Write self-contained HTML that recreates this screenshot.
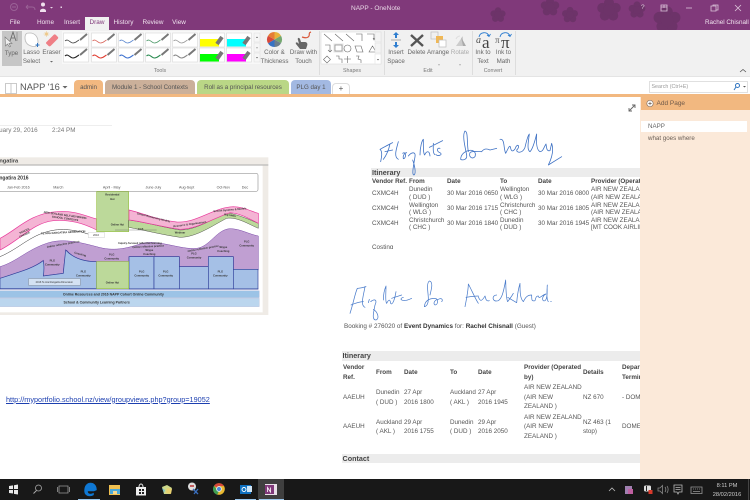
<!DOCTYPE html>
<html><head><meta charset="utf-8"><title>NAPP - OneNote</title>
<style>
html,body{margin:0;padding:0;background:#fff}
body{width:750px;height:500px;overflow:hidden;position:relative;font-family:"Liberation Sans",sans-serif;filter:blur(.3px)}
.a{position:absolute}
.t{position:absolute;white-space:nowrap;line-height:8px;font-size:6.3px;color:#555}
.b{font-weight:bold;color:#444}
.c{position:absolute;white-space:nowrap;text-align:center;transform:translateX(-50%);font-size:6.2px;line-height:8px;color:#666}
.tab{position:absolute;top:19px;font-size:6.4px;line-height:8px;color:#f0e4ef;transform:translateX(-50%);white-space:nowrap}
.nt{position:absolute;top:80px;height:14px;border-radius:4px 4px 0 0;font-size:6.2px;line-height:15px;color:#555;text-align:center;white-space:nowrap}
</style></head><body>

<!-- title bar -->
<div class="a" style="left:0;top:0;width:750px;height:30px;background:#80397a"></div>
<svg class="a" style="left:0;top:0" width="750" height="30" viewBox="0 0 750 30">
<defs><g id="fl"><circle cx="0" cy="-5" r="3.6"/><circle cx="4.8" cy="-1.5" r="3.6"/><circle cx="3" cy="4" r="3.6"/><circle cx="-3" cy="4" r="3.6"/><circle cx="-4.8" cy="-1.5" r="3.6"/><circle r="4"/></g></defs>
<g fill="#6d3369">
<use href="#fl" transform="translate(498,15) scale(.9)"/>
<use href="#fl" transform="translate(550,7) scale(1.1)"/>
<use href="#fl" transform="translate(570,15) scale(.95)"/>
<use href="#fl" transform="translate(609,10) scale(1.4)"/>
<use href="#fl" transform="translate(637,10) scale(1)"/>
<use href="#fl" transform="translate(667,20) scale(1.6)"/>
</g>
<g fill="none" stroke="#9a6296" stroke-width="1">
<circle cx="14" cy="7" r="3.5"/><path d="M12 7h4M26 7h6c2 0 3 1 3 3M26 7l2-2M26 7l2 2"/>
</g>
<circle cx="43" cy="4.5" r="2" fill="#f0e0ee"/><path d="M40 11c0-3 6-3 6 0v1h-6z" fill="#f0e0ee"/>
<path d="M50 7h3l-1.500 1.500zM60.500 6.500h1.500v1.500h-1.500z" fill="#e6d4e4"/>
<g fill="none" stroke="#dcc6da" stroke-width=".8">
<path d="M661 5h6v6h-6zM661 7h6M664 5v3"/>
<path d="M686 8h6"/>
<path d="M711 6h5v5h-5zM713 6v-1h5v5h-2"/>
<path d="M735 5l6 6M741 5l-6 6"/>
</g>
</svg>
<div class="t" style="left:641px;top:4px;color:#e0cfde;font-size:6.500px">?</div>
<div class="t" style="left:351px;top:5px;width:48px;text-align:center;color:#e8d8e6;font-size:6.500px">NAPP - OneNote</div>
<div class="tab" style="left:15px">File</div>
<div class="tab" style="left:45.500px">Home</div>
<div class="tab" style="left:72px">Insert</div>
<div class="a" style="left:85px;top:17px;width:24px;height:13px;background:#f1f1f1"></div>
<div class="tab" style="left:97px;color:#80397a">Draw</div>
<div class="tab" style="left:123.500px">History</div>
<div class="tab" style="left:153px">Review</div>
<div class="tab" style="left:179px">View</div>
<div class="t" style="left:705px;top:19px;color:#f0e4ef;font-size:6.300px">Rachel Chisnall</div>

<!-- ribbon -->
<div class="a" style="left:0;top:30px;width:750px;height:46px;background:#f1f1f1"></div>
<div class="a" style="left:2px;top:31px;width:20px;height:35px;background:#c6c6c6"></div>
<svg class="a" style="left:0;top:28px" width="750" height="50" viewBox="0 0 750 50">
<!-- type -->
<path d="M5 9l.5 9 2-2 2 3 1-.6-1.500-3h3z" fill="#eee" stroke="#777" stroke-width=".6"/>
<path d="M10 13l3-9 3 9M11 10h4" fill="none" stroke="#666" stroke-width=".8"/><path d="M17 4v9" stroke="#999"/>
<!-- lasso -->
<path d="M30 5c5 0 8 4 8 9s-4 5-7 4-6-3-6-8 2-5 5-5z" fill="#fff" stroke="#bbb" stroke-width=".8"/>
<path d="M35.500 16.500h1.500v-1.500h1v1.500h1.500v1h-1.500v1.500h-1v-1.500h-1.500z" fill="#2f74c0"/>
<!-- eraser -->
<path d="M46.500 14l7-7c.8-.8 1.500-.8 2.200-.2l2 2c.7.700.7 1.400 0 2.100l-7 7c-.8.7-1.500.7-2.200 0l-2-2c-.7-.6-.7-1.200 0-1.900z" fill="#ef7f86"/>
<circle cx="46.500" cy="6" r="1.500" fill="#edc88a"/><path d="M46.500 3v6M43.500 6h6M44.500 4l4 4M48.500 4l-4 4" stroke="#edc88a" stroke-width=".5"/>
<path d="M50 33l1.500 1.500 1.500-1.500z" fill="#666"/>
<!-- gallery -->
<rect x="62" y="3" width="198" height="33" fill="#fff" opacity=".5"/>
<g fill="#fff" stroke="#ddd" stroke-width=".7">
<rect x="63.500" y="5" width="25" height="14"/><rect x="91.500" y="5" width="25" height="14"/><rect x="118.500" y="5" width="25" height="14"/><rect x="145.500" y="5" width="25" height="14"/><rect x="172.500" y="5" width="25" height="14"/><rect x="199.500" y="5" width="25" height="14"/><rect x="226.500" y="5" width="25" height="14"/>
<rect x="63.500" y="20" width="25" height="14"/><rect x="91.500" y="20" width="25" height="14"/><rect x="118.500" y="20" width="25" height="14"/><rect x="145.500" y="20" width="25" height="14"/><rect x="172.500" y="20" width="25" height="14"/><rect x="199.500" y="20" width="25" height="14"/><rect x="226.500" y="20" width="25" height="14"/>
</g>
<g fill="none" stroke-width=".8">
<path d="M65 13c3-3 5 2 8 2s4-2 6-3" stroke="#444"/><path d="M92.500 13c3-3 5 2 8 2s4-2 6-3" stroke="#d9665c"/><path d="M119.500 13c3-3 5 2 8 2s4-2 6-3" stroke="#5a86cf"/><path d="M146.500 13c3-3 5 2 8 2s4-2 6-3" stroke="#4f9a6a"/><path d="M173.500 13c3-3 5 2 8 2s4-2 6-3" stroke="#999"/>
<g stroke-width="1.100"><path d="M65 28c3-3 5 2 8 2s4-2 6-3" stroke="#222"/><path d="M92.500 28c3-3 5 2 8 2s4-2 6-3" stroke="#e03c30"/><path d="M119.500 28c3-3 5 2 8 2s4-2 6-3" stroke="#3c70cf"/><path d="M146.500 28c3-3 5 2 8 2s4-2 6-3" stroke="#2a8a50"/><path d="M173.500 28c3-3 5 2 8 2s4-2 6-3" stroke="#888"/></g>
</g>
<g stroke="#777" stroke-width="2"><path d="M80 12l7-6M107.500 12l7-6M134.500 12l7-6M161.500 12l7-6M188.500 12l7-6M80 27l7-6M107.500 27l7-6M134.500 27l7-6M161.500 27l7-6M188.500 27l7-6"/></g>
<rect x="200" y="11" width="19" height="7.500" fill="#ff0"/><rect x="227" y="11" width="19" height="7.500" fill="#0ff"/><rect x="200" y="26" width="19" height="7.500" fill="#0f0"/><rect x="227" y="26" width="19" height="7.500" fill="#f0f"/>
<g stroke="#777" stroke-width="4"><path d="M217 16l5-7M244 16l5-7M217 31l5-7M244 31l5-7"/></g>
<!-- scrollbar -->
<rect x="254" y="5" width="6" height="9" fill="#f6f6f6" stroke="#ddd" stroke-width=".5"/><rect x="254" y="15" width="6" height="9" fill="#f6f6f6" stroke="#ddd" stroke-width=".5"/><rect x="254" y="25" width="6" height="9" fill="#f6f6f6" stroke="#ddd" stroke-width=".5"/>
<path d="M256 10l1-1.500 1 1.500zM256 19.500h2l-1 1zM256 29h2l-1 1.500z" fill="#666"/>
<!-- color wheel -->
<path d="M274.500 4a7.500 7.500 0 0 1 6.500 3.700l-6.500 3.800z" fill="#e8b23a"/><path d="M281 7.700a7.500 7.500 0 0 1 0 7.500l-6.500-3.700z" fill="#74a86f"/><path d="M281 15.200a7.500 7.500 0 0 1-6.500 3.800v-7.500z" fill="#6d7e8c"/><path d="M274.500 19a7.500 7.500 0 0 1-6.500-3.800l6.500-3.700z" fill="#3772c4"/><path d="M268 15.200a7.500 7.500 0 0 1 0-7.500l6.500 3.800z" fill="#d8483a"/><path d="M268 7.700a7.500 7.500 0 0 1 6.500-3.700v7.500z" fill="#e67d35"/>
<!-- touch -->
<path d="M298 12c-1-2 1-3 2-1l1 3 4 0c2 0 3 2 2 4l-1 3h-6l-4-5c-1-2 1-2 2-1l1 1z" fill="#666"/>
<path d="M302 9c3 1 6 1 7-1s-1-3 2-4" fill="none" stroke="#d9583a" stroke-width="1.200"/>
<!-- shapes -->
<rect x="321" y="4" width="60" height="32" fill="#fff" stroke="#ddd" stroke-width=".6"/>
<g fill="none" stroke="#666" stroke-width=".6">
<path d="M324 6l8 7M335 6l8 7M346 6l8 7M356 6h6v7M367 6h7v6M373 10l1 2 1-2"/>
<path d="M325 17h5v7M328 22l2 2 2-2"/><circle cx="347.500" cy="20.500" r="3.500"/><path d="M355 18h6l2 6h-6zM369 24l3.500-6 3.500 6z"/>
<path d="M327 28l3.500 3.500-3.500 3.500-3.500-3.500zM336 28h3v3h3v4M344 31h7M347.500 28v7M356 28h3l-1 3 3 1v3"/>
</g>
<rect x="333.500" y="15.500" width="10" height="9" fill="#e4e4e4"/>
<rect x="335" y="17" width="7" height="6" fill="#fff" stroke="#888" stroke-width=".7"/>
<rect x="375" y="4" width="6" height="10" fill="#f4f4f4" stroke="#ddd" stroke-width=".5"/><rect x="375" y="15" width="6" height="10" fill="#f4f4f4" stroke="#ddd" stroke-width=".5"/><rect x="375" y="26" width="6" height="10" fill="#fff" stroke="#ddd" stroke-width=".5"/>
<path d="M377 31h2l-1 1.500z" fill="#555"/>
<!-- insert space -->
<path d="M396 4l-3 3h2v3h2v-3h2zM396 20l-3-3h2v-3h2v3h2z" fill="#2f7ed0"/><path d="M391 12h10" stroke="#aaa"/>
<!-- delete -->
<path d="M411 7l12 11M423 7l-12 11" stroke="#555" stroke-width="2.400"/>
<!-- arrange -->
<rect x="431" y="4" width="7" height="7" fill="#f0f0f0" stroke="#bbb" stroke-width=".7"/><rect x="436" y="8" width="7" height="7" fill="#f0b856"/><rect x="439" y="12" width="7" height="7" fill="#fff" stroke="#bbb" stroke-width=".7"/>
<!-- rotate -->
<path d="M456 18l7-10v10z" fill="#ccc"/><path d="M463 18l-2-9 5 9z" fill="#aaa"/><path d="M456 11c1-2 2-3 4-3" fill="none" stroke="#ddd"/>
<path d="M438 36.500h2l-1 1zM459 36.500h2l-1 1z" fill="#777"/>
<!-- ink to text/math -->
<path d="M479 9c1-5 8-6 10-1M490.500 6l-1.500 2.500-2-1.500" fill="none" stroke="#2f7ed0" stroke-width=".9"/>
<path d="M500 9c1-5 8-6 10-1M511.500 6l-1.500 2.500-2-1.500" fill="none" stroke="#2f7ed0" stroke-width=".9"/>
<text x="476" y="15" font-size="10" font-style="italic" fill="#555" font-family="Liberation Serif">a</text>
<text x="482" y="20" font-size="17" fill="#444" font-family="Liberation Serif">a</text>
<text x="495" y="15" font-size="9" fill="#555" font-family="Liberation Serif">π</text>
<text x="501" y="20" font-size="17" fill="#444" font-family="Liberation Serif">π</text>
<path d="M740 44l3-2.500 3 2.500" fill="none" stroke="#555" stroke-width=".8"/>
<g stroke="#ddd" stroke-width="1"><path d="M319.500 3v44M384.500 3v44M472.500 3v44M515.500 3v44"/></g>
</svg>
<div class="c" style="left:11.500px;top:50px">Type</div>
<div class="c" style="left:31.500px;top:49px;line-height:8.500px">Lasso<br>Select</div>
<div class="c" style="left:51.500px;top:49px">Eraser</div>
<div class="c" style="left:274.500px;top:49px;line-height:8.500px">Color &amp;<br>Thickness</div>
<div class="c" style="left:303.500px;top:49px;line-height:8.500px">Draw with<br>Touch</div>
<div class="c" style="left:396px;top:49px;line-height:8.500px">Insert<br>Space</div>
<div class="c" style="left:416.500px;top:49px">Delete</div>
<div class="c" style="left:438px;top:49px">Arrange</div>
<div class="c" style="left:460px;top:49px;color:#aaa">Rotate</div>
<div class="c" style="left:483px;top:49px;line-height:8.500px">Ink to<br>Text</div>
<div class="c" style="left:503.500px;top:49px;line-height:8.500px">Ink to<br>Math</div>
<div class="c" style="left:160px;top:67px;font-size:5.300px;color:#777">Tools</div>
<div class="c" style="left:352px;top:67px;font-size:5.300px;color:#777">Shapes</div>
<div class="c" style="left:428px;top:67px;font-size:5.300px;color:#777">Edit</div>
<div class="c" style="left:493px;top:67px;font-size:5.300px;color:#777">Convert</div>

<!-- notebook bar -->
<div class="a" style="left:0;top:76px;width:750px;height:18px;background:#fff;border-top:1px solid #e4e4e4;box-sizing:border-box"></div>
<svg class="a" style="left:0;top:76px" width="90" height="20"><path d="M5.500 7.500h11v10h-11zM11 7.500v10" fill="#fff" stroke="#bbb" stroke-width=".8"/><path d="M62.500 10h5l-2.500 2.500z" fill="#666"/></svg>
<div class="t" style="left:20px;top:82px;font-size:9.300px;line-height:11px;color:#555">NAPP '16</div>
<div class="nt" style="left:74px;width:29px;background:#f2b880">admin</div>
<div class="nt" style="left:105px;width:90px;background:#cbb09a">Module 1 - School Contexts</div>
<div class="nt" style="left:197px;width:92px;background:#bad786">Roll as a principal resources</div>
<div class="nt" style="left:291px;width:40px;background:#a3b9e2">PLG day 1</div>
<div class="nt" style="left:332px;width:16px;background:#fff;border:1px solid #ddd;border-bottom:0;top:83px;height:11px;line-height:10px;font-size:8px">+</div>
<div class="a" style="left:649px;top:81px;width:97px;height:9.500px;background:#fff;border:1px solid #e0e0e0;font-size:5.300px;line-height:10px;color:#999;text-indent:1.500px">Search (Ctrl+E)</div>
<svg class="a" style="left:733px;top:81px" width="16" height="11"><circle cx="4.500" cy="4.500" r="2" fill="none" stroke="#2f74c0"/><path d="M3 6l-2 3" stroke="#2f74c0"/><path d="M10 5h3l-1.500 1.500z" fill="#555"/></svg>
<div class="a" style="left:0;top:94px;width:750px;height:3px;background:#f2b880"></div>

<!-- page panel -->
<div class="a" style="left:640px;top:97px;width:110px;height:382px;background:#fbe9d9;z-index:3"></div>
<div class="a" style="left:641px;top:97px;width:109px;height:13px;background:#f2b880;z-index:3;font-size:6.500px;line-height:14px;color:#705a4a;text-indent:15.500px">Add Page</div>
<svg class="a" style="left:645px;top:98px;z-index:4" width="11" height="11"><circle cx="5" cy="5.500" r="3.200" fill="#fff" stroke="#8b7565" stroke-width=".7"/><path d="M3.300 5.500h3.400M5 3.800v3.400" stroke="#6b5a4c" stroke-width=".7"/></svg>
<div class="a" style="left:641px;top:121px;width:106px;height:11px;background:#fff;z-index:3;font-size:6.200px;line-height:12px;color:#666;text-indent:7px">NAPP</div>
<div class="a" style="left:648px;top:135px;z-index:3;font-size:6.200px;line-height:8px;color:#6b6058">what goes where</div>

<!-- left content -->
<div class="a" style="left:0;top:125px;width:112px;height:1px;background:#eee"></div>
<div class="t" style="left:-11px;top:127px;font-size:6.300px;color:#777">January 29, 2016</div>
<div class="t" style="left:52px;top:127px;font-size:6.300px;color:#777">2:24 PM</div>
<svg class="a" style="left:628px;top:104px" width="8" height="8"><path d="M1 7l6-6M4 1h3v3M1 4v3h3" fill="none" stroke="#666" stroke-width=".9"/></svg>

<!-- chart -->
<svg class="a" style="left:0;top:150px" width="270" height="170" viewBox="0 0 810 510">
<rect x="0" y="22" width="805" height="473" fill="#efebe6"/>
<path d="M0 45h805" stroke="#999" stroke-width="2.500"/>
<rect x="0" y="47" width="788" height="440" fill="#fff"/>
<text x="-2" y="37" font-size="17" font-weight="bold" fill="#444" font-family="Liberation Sans">ngatira</text>
<rect x="-10" y="70" width="784" height="54" rx="6" fill="#fff" stroke="#999" stroke-width="2"/>
<text x="-2" y="88" font-size="15" font-weight="bold" fill="#333" font-family="Liberation Sans">ngatira 2016</text>
<g font-size="11" fill="#555" font-family="Liberation Sans" text-anchor="middle"><text x="55" y="115">Jan-Feb 2016</text><text x="175" y="115">March</text><text x="335" y="115">April - May</text><text x="460" y="115">June-July</text><text x="560" y="115">Aug-Sept</text><text x="670" y="115">Oct-Nov</text><text x="735" y="115">Dec</text></g>
<!-- pink left -->
<path d="M0 265C50 240 90 190 170 185C225 180 260 200 290 207V240C250 220 210 208 160 212C100 218 60 270 0 300Z" fill="#f4b4d4" stroke="#e8389a" stroke-width="2"/>
<!-- lower black line of white band -->
<path d="M0 320C60 295 95 250 165 240C210 235 250 245 290 262" fill="none" stroke="#333" stroke-width="1.500"/>
<!-- purple -->
<path d="M0 350C50 335 80 300 140 280C190 262 250 280 290 290C340 305 380 295 420 282C470 265 540 300 590 295C630 290 650 238 690 236C720 236 745 252 775 258V360H700V320H625V350H538V320H387V335H290C250 335 220 325 200 300C195 320 190 350 190 370L130 378C132 360 132 345 130 330C100 355 60 365 0 385Z" fill="#c09fd2" stroke="#7a4aa8" stroke-width="1.500"/>
<!-- blue -->
<path d="M0 385C60 365 100 355 130 332C133 350 132 365 130 378L190 370C192 345 195 320 197 300C220 325 250 335 290 335V416H0Z" fill="#a5c0e6" stroke="#2f3f9a" stroke-width="2"/>
<rect x="387" y="320" width="75" height="97" fill="#a5c0e6" stroke="#2f3f9a" stroke-width="2"/>
<rect x="462" y="320" width="76" height="97" fill="#a5c0e6" stroke="#2f3f9a" stroke-width="2"/>
<rect x="538" y="350" width="87" height="67" fill="#a5c0e6" stroke="#2f3f9a" stroke-width="2"/>
<rect x="625" y="320" width="75" height="97" fill="#a5c0e6" stroke="#2f3f9a" stroke-width="2"/>
<rect x="700" y="358" width="74" height="59" fill="#a5c0e6" stroke="#2f3f9a" stroke-width="2"/>
<path d="M0 417H775" stroke="#2f3f9a" stroke-width="2"/>
<!-- green -->
<rect x="290" y="125" width="96" height="120" fill="#bcd99a" stroke="#9ac24a" stroke-width="2"/>
<rect x="290" y="335" width="96" height="81" fill="#bcd99a" stroke="#9ac24a" stroke-width="2"/>
<path d="M386 210C430 215 480 230 540 240C590 240 640 205 680 188C720 195 750 210 775 220V235C745 222 710 200 680 205C640 225 590 262 540 262C490 255 430 240 386 232Z" fill="#bcd99a" stroke="#333" stroke-width="1.200"/>
<path d="M387 180C430 190 470 210 530 216C590 220 640 172 700 170C730 170 755 185 775 190V220C745 205 720 190 690 188C640 205 590 238 540 238C480 230 430 215 387 210Z" fill="#f4b4d4" stroke="#e8389a" stroke-width="2"/>
<rect x="265" y="247" width="48" height="16" fill="#fff" stroke="#bbb"/>
<path d="M345 240H470" stroke="#555"/>
<rect x="86" y="386" width="155" height="20" fill="#d4e2f3" stroke="#777"/>
<!-- bars -->
<rect x="-2" y="422" width="780" height="21" fill="#9cc3e6" stroke="#aac" stroke-width=".8"/>
<rect x="-2" y="445" width="780" height="25" fill="#bbd6ee" stroke="#aac" stroke-width=".8"/>
<g font-family="Liberation Sans" fill="#333" text-anchor="middle">
<text x="340" y="436" font-size="10.500" font-weight="bold">Online Resources and 2016 NAPP Cohort Online Community</text>
<text x="290" y="461" font-size="10.500" font-weight="bold">School &amp; Community Learning Partners</text>
<g font-size="8" font-weight="bold">
<text x="337" y="137">Residential</text><text x="337" y="150">Hui</text><text x="352" y="226">Online Hui</text><text x="337" y="400">Online Hui</text><text x="422" y="240">TGS</text>
<text x="335" y="316">PLG</text><text x="335" y="329">Community</text><text x="448" y="303">Skype</text><text x="448" y="315">Coaching</text>
<text x="425" y="368">PLG</text><text x="425" y="380">Community</text><text x="497" y="368">PLG</text><text x="497" y="380">Community</text>
<text x="582" y="314">PLG</text><text x="582" y="326">Community</text><text x="661" y="368">PLG</text><text x="661" y="380">Community</text>
<text x="670" y="294">Skype</text><text x="670" y="306">Coaching</text><text x="740" y="278">PLG</text><text x="740" y="290">Community</text>
<text x="250" y="368">PLG</text><text x="250" y="380">Community</text><text x="157" y="335">PLG</text><text x="157" y="347">Community</text>
<text x="240" y="315" transform="rotate(15 240 315)">Coaching</text>
<text x="195" y="198" transform="rotate(8 195 198)">NEW ZEALAND SELF-REVIEWING</text><text x="195" y="208" transform="rotate(8 195 208)">SCHOOL CONTEXTS</text>
<text x="75" y="245" transform="rotate(-25 75 245)">SCHOOL</text><text x="75" y="256" transform="rotate(-25 75 256)">CHANGE</text>
<text x="190" y="250" transform="rotate(-3 190 250)">TE ARA RANGATIRA GENERATION</text>
<text x="190" y="285" transform="rotate(-10 190 285)">Online reflective practices</text>
<text x="420" y="282">Inquiry-focused reflective learning</text>
<text x="445" y="292" transform="rotate(-3 445 292)">Online reflective practice</text>
<text x="610" y="298" transform="rotate(-10 610 298)">Online reflective practice</text>
<text x="690" y="182" transform="rotate(-5 690 182)">School Systems &amp; Models</text>
<text x="460" y="205" transform="rotate(14 460 205)">School Resourcing Models</text>
<text x="570" y="225" transform="rotate(-8 570 225)">Resource &amp; Organisations</text>
<text x="540" y="250">Webinar</text><text x="690" y="198" transform="rotate(8 690 198)">Big Ideas</text>
</g>
<text x="163" y="399" font-size="7.500">2016 Te Ara Rangatira Dimension</text>
<text x="288" y="258" font-size="8">2016</text>
</g>
</svg>

<!-- link -->
<div class="t" style="left:6px;top:395.500px;font-size:7.300px;color:#1c3fb0;text-decoration:underline">http://myportfolio.school.nz/view/groupviews.php?group=19052</div>

<!-- Table 1 -->
<div class="a" style="left:371px;top:168px;width:269px;height:9px;background:#ececec"></div>
<div class="t b" style="left:372px;top:168.500px;font-size:7.200px">Itinerary</div>
<div class="t b" style="left:372px;top:177.500px">Vendor Ref.</div><div class="t b" style="left:409px;top:177.500px">From</div><div class="t b" style="left:447px;top:177.500px">Date</div><div class="t b" style="left:500px;top:177.500px">To</div><div class="t b" style="left:538px;top:177.500px">Date</div><div class="t b" style="left:591px;top:177.500px">Provider (Operated</div>

<div class="t" style="left:372px;top:190px">CXMC4H</div><div class="t" style="left:409px;top:186px">Dunedin</div><div class="t" style="left:409px;top:193.500px">( DUD )</div><div class="t" style="left:447px;top:190px">30 Mar 2016 0650</div><div class="t" style="left:500px;top:186px">Wellington</div><div class="t" style="left:500px;top:193.500px">( WLG )</div><div class="t" style="left:538px;top:190px">30 Mar 2016 0800</div><div class="t" style="left:591px;top:186px">AIR NEW ZEALAND</div><div class="t" style="left:591px;top:193.500px">(AIR NEW ZEALAND</div>

<div class="t" style="left:372px;top:205px">CXMC4H</div><div class="t" style="left:409px;top:201.500px">Wellington</div><div class="t" style="left:409px;top:209px">( WLG )</div><div class="t" style="left:447px;top:205px">30 Mar 2016 1715</div><div class="t" style="left:500px;top:201.500px">Christchurch</div><div class="t" style="left:500px;top:209px">( CHC )</div><div class="t" style="left:538px;top:205px">30 Mar 2016 1805</div><div class="t" style="left:591px;top:201.500px">AIR NEW ZEALAND</div><div class="t" style="left:591px;top:208.500px">(AIR NEW ZEALAND</div>

<div class="t" style="left:372px;top:220px">CXMC4H</div><div class="t" style="left:409px;top:217px">Christchurch</div><div class="t" style="left:409px;top:224px">( CHC )</div><div class="t" style="left:447px;top:220px">30 Mar 2016 1840</div><div class="t" style="left:500px;top:217px">Dunedin</div><div class="t" style="left:500px;top:224px">( DUD )</div><div class="t" style="left:538px;top:220px">30 Mar 2016 1945</div><div class="t" style="left:591px;top:217px">AIR NEW ZEALAND</div><div class="t" style="left:591px;top:224px">[MT COOK AIRLINE</div>
<div class="a" style="left:372px;top:240px;width:100px;height:9px;overflow:hidden"><div class="t" style="left:0;top:4px">Costing</div></div>

<!-- Table 2 -->
<div class="t" style="left:344px;top:323px;font-size:6.350px">Booking # 276020 of <b style="color:#333">Event Dynamics</b> for: <b style="color:#333">Rachel Chisnall</b> (Guest)</div>
<div class="a" style="left:342px;top:351px;width:298px;height:10px;background:#ececec"></div>
<div class="t b" style="left:342.500px;top:352px;font-size:7.200px">Itinerary</div>
<div class="t b" style="left:343px;top:363.500px">Vendor</div><div class="t b" style="left:343px;top:373.500px">Ref.</div><div class="t b" style="left:376px;top:368.500px">From</div><div class="t b" style="left:404px;top:368.500px">Date</div><div class="t b" style="left:450px;top:368.500px">To</div><div class="t b" style="left:478px;top:368.500px">Date</div><div class="t b" style="left:524px;top:363.500px">Provider (Operated</div><div class="t b" style="left:524px;top:373.500px">by)</div><div class="t b" style="left:583px;top:368.500px">Details</div><div class="t b" style="left:622px;top:363.500px">Departure</div><div class="t b" style="left:622px;top:373.500px">Terminal</div>

<div class="t" style="left:343px;top:393.500px">AAEUH</div><div class="t" style="left:376px;top:388.500px">Dunedin</div><div class="t" style="left:376px;top:398.500px">( DUD )</div><div class="t" style="left:404px;top:388.500px">27 Apr</div><div class="t" style="left:404px;top:398.500px">2016 1800</div><div class="t" style="left:450px;top:388.500px">Auckland</div><div class="t" style="left:450px;top:398.500px">( AKL )</div><div class="t" style="left:478px;top:388.500px">27 Apr</div><div class="t" style="left:478px;top:398.500px">2016 1945</div><div class="t" style="left:524px;top:383.500px">AIR NEW ZEALAND</div><div class="t" style="left:524px;top:393.500px">(AIR NEW</div><div class="t" style="left:524px;top:403px">ZEALAND )</div><div class="t" style="left:583px;top:393.500px">NZ 670</div><div class="t" style="left:622px;top:393.500px">- DOMESTIC</div>

<div class="t" style="left:343px;top:423px">AAEUH</div><div class="t" style="left:376px;top:418.500px">Auckland</div><div class="t" style="left:376px;top:428px">( AKL )</div><div class="t" style="left:404px;top:418.500px">29 Apr</div><div class="t" style="left:404px;top:428px">2016 1755</div><div class="t" style="left:450px;top:418.500px">Dunedin</div><div class="t" style="left:450px;top:428px">( DUD )</div><div class="t" style="left:478px;top:418.500px">29 Apr</div><div class="t" style="left:478px;top:428px">2016 2050</div><div class="t" style="left:524px;top:413.500px">AIR NEW ZEALAND</div><div class="t" style="left:524px;top:423px">(AIR NEW</div><div class="t" style="left:524px;top:432.500px">ZEALAND )</div><div class="t" style="left:583px;top:418.500px">NZ 463 (1</div><div class="t" style="left:583px;top:428px">stop)</div><div class="t" style="left:622px;top:423px">DOMESTIC</div>

<div class="a" style="left:342px;top:454px;width:298px;height:9px;background:#ececec"></div>
<div class="t b" style="left:342.500px;top:454.500px;font-size:7.200px">Contact</div>

<!-- handwriting -->
<svg class="a" style="left:340px;top:120px" width="300" height="130" viewBox="0 0 900 390">
<g fill="none" stroke="#3f72c4" stroke-width="2.400" stroke-linecap="round" stroke-linejoin="round">
<path d="M122 125C125 110 128 95 120 88C135 80 150 72 158 68M150 72C146 90 140 105 130 118M135 95L158 90"/>
<path d="M175 65C170 85 160 110 175 118M188 100C200 92 198 118 190 116C188 105 195 98 200 98"/>
<path d="M205 108C215 95 228 95 225 110C220 140 215 165 222 165C230 160 222 130 218 120M240 105C240 80 246 62 250 58C250 85 250 100 254 105C258 95 268 88 270 108"/>
<path d="M280 70C280 85 278 100 285 104M268 82L308 62M300 85C290 82 290 95 300 98C310 104 295 110 288 104"/>
<path d="M385 95C380 70 385 35 375 33C366 45 375 80 380 105C382 118 370 122 362 118C362 105 372 95 385 92C398 88 410 95 405 110C398 118 385 112 390 98C395 92 410 95 425 95C432 85 440 85 450 90L470 85"/>
<path d="M480 58C495 55 490 85 497 100C505 85 510 70 512 85C515 100 525 90 528 80C535 70 540 80 530 90C530 100 548 100 555 82C560 60 565 45 568 42C565 65 560 90 570 95C580 85 585 60 590 42C588 70 590 90 600 95C610 95 612 80 618 72C620 85 620 95 630 92L635 70C640 85 640 105 625 135L665 110"/>
</g>
</svg>
<svg class="a" style="left:340px;top:270px" width="300" height="200" viewBox="0 0 900 600">
<g fill="none" stroke="#4a7ccb" stroke-width="2.200" stroke-linecap="round" stroke-linejoin="round">
<path d="M30 130C40 100 45 70 52 55C60 55 70 52 78 50M33 105C45 100 60 95 70 95"/>
<path d="M75 50C70 80 60 105 75 112M85 98L88 88M92 95C105 85 112 90 105 105C100 130 95 150 108 150C120 145 112 125 100 118"/>
<path d="M130 90C130 70 135 55 138 48C138 70 135 95 140 100C145 90 150 85 152 100C155 105 162 100 168 65M155 85L185 75M190 82C175 85 185 100 215 85"/>
<path d="M270 75C275 55 280 35 268 33C258 40 265 70 265 85C265 100 262 108 253 110C255 90 270 85 285 85C295 85 295 105 285 105C278 100 285 88 295 88C305 82 310 90 305 95"/>
<path d="M375 110C380 85 385 55 385 42C395 60 405 85 415 100M378 82C390 80 405 78 415 78"/>
<path d="M415 80C420 95 425 95 435 78C438 90 440 95 448 92M470 75C455 75 455 98 475 92C485 85 490 70 497 30C498 60 498 85 503 95C510 85 515 80 520 70M503 82L530 98C532 75 537 50 540 40C540 65 540 85 550 95C555 85 560 75 575 75C575 90 575 95 585 92C588 80 590 78 595 78C597 90 605 75 618 72C605 78 605 96 615 92C625 85 620 50 622 45C620 70 620 90 625 95"/>
<path d="M632 94L634 94"/>
</g>
</svg>

<!-- taskbar -->
<div class="a" style="left:0;top:479px;width:750px;height:21px;background:#181818;z-index:5"></div>
<div class="a" style="left:258px;top:479px;width:26px;height:21px;background:#3f3f3f;z-index:5"></div>
<svg class="a" style="left:0;top:479px;z-index:6" width="750" height="21">
<path d="M9 7l4-.6V10H9zM14 6.300L18 5.500V10H14zM9 11h4v3.500L9 14zM14 11h4v4.500l-4-.6z" fill="#e8e8e8"/>
<circle cx="38.500" cy="9" r="3" fill="none" stroke="#aaa" stroke-width=".8"/><path d="M36.500 11.500l-3 3" stroke="#aaa"/>
<path d="M59 7h9v7h-9zM57.500 8v5M69.500 8v5" fill="none" stroke="#999" stroke-width=".8"/>
<path d="M94 12H85c0-5 1-6 3.500-6 3 0 5 2 5 5 0 1-6 0-6 1 0 3 3 4 6 2v2c-4 2-9 1-9-4 0-6 3-8 6-8 4 0 6 3 6 7z" fill="#0f78d4" stroke="#0f78d4" stroke-width=".5"/>
<path d="M110 6h10l0 10h-11v-10z" fill="#f0c050"/><rect x="110" y="10" width="10" height="5" fill="#4aa8d8"/><rect x="113" y="12" width="4" height="3" fill="#f4d890"/>
<path d="M136 8h10v8.500h-10z" fill="#eee"/><path d="M139 8c0-4 4-4 4 0" fill="none" stroke="#eee"/><path d="M139 10h2v2h-2zM142 10h2v2h-2zM139 13h2v2h-2zM142 13h2v2h-2z" fill="#222"/>
<path d="M162 8l5-2 5 3-2 6-6 0z" fill="#cdd88a"/><path d="M167 9l5 1-1 5-5-1z" fill="#e8d070"/><path d="M162 9l3 2-1 3z" fill="#7cc0c8"/>
<circle cx="192" cy="7.500" r="4" fill="#ddd"/><path d="M190 7l4 0" stroke="#b33" stroke-width="1.500"/><path d="M193 10l5 5M198 10l-4 5" stroke="#3a70c0" stroke-width="1.300"/>
<circle cx="219" cy="10" r="5.800" fill="#e8b830"/><path d="M219 4.200a5.800 5.800 0 0 1 5 2.900h-5a3 3 0 0 0-2.600 1.400l-2.300-1.800a5.800 5.800 0 0 1 4.900-2.500z" fill="#d8473a"/><path d="M214.100 6.700a5.800 5.800 0 0 0 3 9l2-3.500-2.600-2z" fill="#3f9e52"/><circle cx="219" cy="10" r="2.400" fill="#4a86d8" stroke="#eee" stroke-width=".9"/>
<rect x="240" y="6" width="11" height="9" fill="#0f70c0"/><rect x="247" y="7" width="5" height="6" fill="#cde3f5"/><circle cx="244" cy="10.500" r="2" fill="none" stroke="#fff" stroke-width=".9"/>
<rect x="265" y="5" width="12" height="11" fill="#e8e0e8"/><rect x="265" y="6" width="9" height="9" fill="#80397a"/><path d="M267.500 13V8.500l3 4.500V8.500" fill="none" stroke="#fff" stroke-width=".8"/>
<rect x="78" y="20" width="22" height="1" fill="#9cc8ee"/><rect x="235" y="20" width="21" height="1" fill="#9cc8ee"/><rect x="259" y="20" width="25" height="1" fill="#9cc8ee"/>
<path d="M609 12l3-3 3 3" fill="none" stroke="#bbb" stroke-width=".8"/>
<rect x="625" y="7" width="7" height="8" fill="#a080b0"/><rect x="628" y="10" width="5" height="5" fill="#c060a0"/>
<rect x="644" y="6.500" width="7" height="6" rx="1.500" fill="#ddd"/><rect x="646" y="7" width="1" height="5" fill="#222"/><rect x="648.500" y="11" width="4" height="4" fill="#d83a2c"/>
<path d="M658 9h2l2.500-2.500v8L660 12h-2zM665 8c1 1.500 1 3.500 0 5M667 7c1.500 2 1.500 5 0 7" fill="none" stroke="#888" stroke-width=".8"/>
<path d="M674 6h8v7h-3l-1 2-1-2h-3zM675.500 8.500h5M675.500 10.500h5" fill="none" stroke="#bbb" stroke-width=".8"/>
<path d="M691 8h11v6.500h-11zM693 10h1M695 10h1M697 10h1M699 10h1M693 12.500h7" fill="none" stroke="#999" stroke-width=".8"/>
<path d="M748.500 0v21" stroke="#444"/>
</svg>
<div class="t" style="left:716px;top:481.500px;z-index:7;width:22px;color:#ccc;font-size:5.700px;text-align:center">8:11 PM</div>
<div class="t" style="left:711px;top:490.500px;z-index:7;width:32px;color:#ccc;font-size:5.700px;text-align:center">28/02/2016</div>
</body></html>
